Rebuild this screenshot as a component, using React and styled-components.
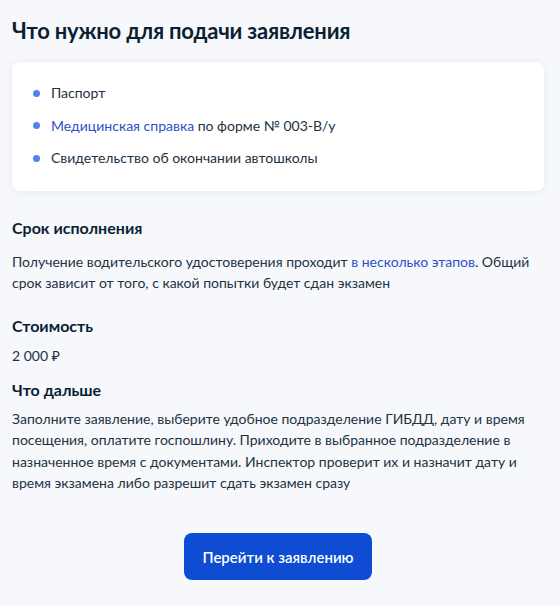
import React from "react";
import styled, { createGlobalStyle } from "styled-components";

const GlobalStyle = createGlobalStyle`
  html, body {
    margin: 0;
    padding: 0;
    background: #f6f8fc;
  }
  body {
    font-family: Lato, "Noto Sans", sans-serif;
    color: #0b1f33;
    -webkit-font-smoothing: antialiased;
  }
`;

const Page = styled.main`
  width: 532px;
  padding: 15px 16px 24px 12px;
  display: flex;
  flex-direction: column;
`;

const Title = styled.h1`
  margin: 0 0 15px;
  font-size: 22px;
  line-height: 32px;
  letter-spacing: -0.2px;
  font-weight: 700;
  color: #0b1f33;
`;

const Card = styled.section`
  background: #ffffff;
  border-radius: 8px;
  box-shadow: 0 1px 6px rgba(176, 190, 215, 0.25);
  padding: 19px 21px 21px;
`;

const List = styled.ul`
  list-style: none;
  margin: 0;
  padding: 0;
  display: flex;
  flex-direction: column;
  gap: 8.5px;
`;

const Item = styled.li`
  display: flex;
  align-items: center;
  gap: 11px;
  font-size: 14px;
  line-height: 24px;
  color: #233242;
`;

const Dot = styled.span`
  flex: 0 0 auto;
  width: 7px;
  height: 7px;
  border-radius: 50%;
  background: #5283e6;
`;

const Link = styled.a`
  color: #2d50c8;
  text-decoration: none;
`;

const Heading = styled.h3`
  margin: ${(p) => p.$top}px 0 0;
  font-size: 16px;
  line-height: 24px;
  font-weight: 700;
  color: #0b1f33;
`;

const Text = styled.p`
  margin: ${(p) => p.$top}px 0 0;
  font-size: 14px;
  line-height: 21.33px;
  color: #233242;
`;

const ButtonRow = styled.div`
  display: flex;
  justify-content: center;
  margin-top: 40px;
`;

const Button = styled.button`
  height: 47px;
  padding: 0 19px;
  border: none;
  border-radius: 8px;
  background: #0d4cd3;
  color: #ffffff;
  font-family: Lato, "Noto Sans", sans-serif;
  font-size: 15px;
  font-weight: 600;
  cursor: pointer;
`;

export default function App() {
  return (
    <>
      <GlobalStyle />
      <Page>
        <Title>Что нужно для подачи заявления</Title>
        <Card>
          <List>
            <Item>
              <Dot />
              <span>Паспорт</span>
            </Item>
            <Item>
              <Dot />
              <span>
                <Link href="#">Медицинская справка</Link> по форме № 003-В/у
              </span>
            </Item>
            <Item>
              <Dot />
              <span>Свидетельство об окончании автошколы</span>
            </Item>
          </List>
        </Card>

        <Heading $top={25}>Срок исполнения</Heading>
        <Text $top={11}>
          Получение водительского удостоверения проходит{" "}
          <Link href="#">в несколько этапов</Link>. Общий срок зависит от того,
          с какой попытки будет сдан экзамен
        </Text>

        <Heading $top={20}>Стоимость</Heading>
        <Text $top={7}>2 000 ₽</Text>

        <Heading $top={12}>Что дальше</Heading>
        <Text $top={6}>
          Заполните заявление, выберите удобное подразделение ГИБДД, дату и
          время посещения, оплатите госпошлину. Приходите в выбранное
          подразделение в назначенное время с документами. Инспектор проверит
          их и назначит дату и время экзамена либо разрешит сдать экзамен сразу
        </Text>

        <ButtonRow>
          <Button>Перейти к заявлению</Button>
        </ButtonRow>
      </Page>
    </>
  );
}
